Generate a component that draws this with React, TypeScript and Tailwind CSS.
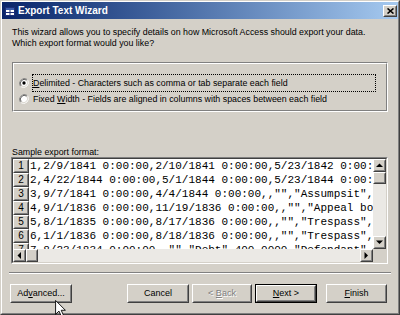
import React from "react";

const ROWS = [
  '1,2/9/1841 0:00:00,2/10/1841 0:00:00,5/23/1842 0:00:',
  '2,4/22/1844 0:00:00,5/1/1844 0:00:00,5/23/1844 0:00:',
  '3,9/7/1841 0:00:00,4/4/1844 0:00:00,,"","Assumpsit",',
  '4,9/1/1836 0:00:00,11/19/1836 0:00:00,,"","Appeal bo',
  '5,8/1/1835 0:00:00,8/17/1836 0:00:00,,"","Trespass",',
  '6,1/1/1836 0:00:00,8/18/1836 0:00:00,,"","Trespass",',
  '7,8/23/1834 0:00:00,,"","Debt",400.0000,"Defendant"',
];

function Raised({ className = "", children }: { className?: string; children?: React.ReactNode }) {
  return (
    <div className={`border border-t-white border-l-white border-r-[#404040] border-b-[#404040] bg-[#d4d0c8] ${className}`}>
      <div className="h-full w-full border border-t-[#d4d0c8] border-l-[#d4d0c8] border-r-[#808080] border-b-[#808080] flex items-center justify-center">
        {children}
      </div>
    </div>
  );
}

function Arrow({ dir }: { dir: "up" | "down" | "left" | "right" }) {
  const pts = {
    up: "0,4 3.5,0.5 7,4",
    down: "0,0.5 3.5,4 7,0.5",
    left: "4,0 0.5,3.5 4,7",
    right: "0.5,0 4,3.5 0.5,7",
  }[dir];
  const vert = dir === "up" || dir === "down";
  return (
    <svg width={vert ? 7 : 5} height={vert ? 5 : 7} viewBox={vert ? "0 0 7 5" : "0 0 5 7"}>
      <polygon points={pts} fill="#000" />
    </svg>
  );
}

function WinButton({
  label,
  u,
  isDefault = false,
  disabled = false,
  className = "",
}: {
  label: string;
  u: number;
  isDefault?: boolean;
  disabled?: boolean;
  className?: string;
}) {
  const text = (
    <span
      className={`text-[9px] leading-[11px] whitespace-pre ${
        disabled ? "text-[#808080] [text-shadow:1px_1px_0_#ffffff]" : "text-black"
      }`}
    >
      {u < 0 ? (
        label
      ) : (
        <>
          {label.slice(0, u)}
          <span className="underline underline-offset-[1px]">{label.slice(u, u + 1)}</span>
          {label.slice(u + 1)}
        </>
      )}
    </span>
  );
  if (isDefault) {
    return (
      <div className={`h-[19px] border border-black ${className}`}>
        <Raised className="h-full w-full">{text}</Raised>
      </div>
    );
  }
  return <Raised className={`h-[19px] ${className}`}>{text}</Raised>;
}

function Radio({ checked }: { checked: boolean }) {
  return (
    <svg width="10" height="10" viewBox="0 0 12 12" className="shrink-0">
      <path d="M10.2 1.8 A6 6 0 0 0 1.8 10.2" fill="none" stroke="#808080" strokeWidth="1" />
      <path d="M1.8 10.2 A6 6 0 0 0 10.2 1.8" fill="none" stroke="#ffffff" strokeWidth="1" />
      <circle cx="6" cy="6" r="4.6" fill="#ffffff" />
      <path d="M9.3 2.7 A4.7 4.7 0 0 0 2.7 9.3" fill="none" stroke="#404040" strokeWidth="1" />
      <path d="M2.7 9.3 A4.7 4.7 0 0 0 9.3 2.7" fill="none" stroke="#d4d0c8" strokeWidth="1" />
      {checked && <circle cx="6" cy="6" r="2" fill="#000" />}
    </svg>
  );
}

export default function App() {
  return (
    <div className="relative w-[400px] h-[315px] overflow-hidden font-['Liberation_Sans',Arial,sans-serif] text-black select-none">
      <div className="w-full h-full border border-t-[#d4d0c8] border-l-[#d4d0c8] border-r-[#404040] border-b-[#404040] bg-[#d4d0c8]">
        <div className="w-full h-full border border-t-white border-l-white border-r-[#808080] border-b-[#808080] flex flex-col">
          {/* Title bar */}
          <div className="h-[17px] shrink-0 flex items-center bg-gradient-to-r from-[#0a246a] to-[#a6caf0]">
            <svg width="10" height="9" viewBox="0 0 10 9" className="ml-[3px] mt-[1px]">
              <rect x="0.5" y="0.5" width="9" height="8" fill="#ffffff" stroke="#1c2f7a" />
              <rect x="1" y="1" width="8" height="2" fill="#3a5aa8" />
              <line x1="5" y1="3" x2="5" y2="8.5" stroke="#1c2f7a" />
              <line x1="0.5" y1="5.5" x2="9.5" y2="5.5" stroke="#1c2f7a" />
            </svg>
            <span className="ml-[3px] text-[10px] font-bold text-white leading-none">Export Text Wizard</span>
            <div className="flex-1" />
            <Raised className="w-[14px] h-[12px] mr-[1px]">
              <svg width="7" height="6" viewBox="0 0 7 6">
                <path d="M0.5 0.5 L6.5 5.5 M6.5 0.5 L0.5 5.5" stroke="#000" strokeWidth="1.6" />
              </svg>
            </Raised>
          </div>

          {/* Content */}
          <div className="flex-1 flex flex-col px-[9px]">
            <p className="ml-[1px] mt-[8px] text-[8.85px] leading-[11px]">
              This wizard allows you to specify details on how Microsoft Access should export your data.
              <br />
              Which export format would you like?
            </p>

            {/* Group box */}
            <div className="ml-[1px] mr-[1px] mt-[13px] border border-t-[#808080] border-l-[#808080] border-r-white border-b-white">
              <div className="border border-t-white border-l-white border-r-[#808080] border-b-[#808080] pt-[10px] pb-[4px] pl-[5px] pr-[10px]">
                <div className="h-[18px] flex items-center">
                  <Radio checked />
                  <div className="ml-[3px] flex-1 h-full border border-dotted border-black flex items-center text-[8.85px] leading-[11px]">
                    <span>
                      <span className="underline underline-offset-[1px]">D</span>elimited - Characters such as comma or tab separate each field
                    </span>
                  </div>
                </div>
                <div className="h-[14px] flex items-center">
                  <Radio checked={false} />
                  <span className="ml-[4px] text-[8.85px] leading-[11px]">
                    Fixed <span className="underline underline-offset-[1px]">W</span>idth - Fields are aligned in columns with spaces between each field
                  </span>
                </div>
              </div>
            </div>

            <div className="ml-[1px] mt-[36px] text-[8.85px] leading-[9px] h-[9px]">Sample export format:</div>

            {/* Grid */}
            <div className="mr-[1px] border border-t-[#808080] border-l-[#808080] border-r-white border-b-white">
              <div className="border border-t-[#404040] border-l-[#404040] border-r-[#d4d0c8] border-b-[#d4d0c8] flex flex-col">
                <div className="flex h-[90px]">
                  <div className="flex-1 bg-white overflow-hidden flex flex-col">
                    {ROWS.map((r, i) => (
                      <div key={i} className="flex h-[14px] shrink-0">
                        <Raised className="w-[16px] h-[14px] shrink-0">
                          <span className="text-[10px] leading-none">{i + 1}</span>
                        </Raised>
                        <div className="pl-[1px] font-['Liberation_Mono','Courier_New',monospace] text-[11px] leading-[14px] whitespace-pre">
                          {r}
                        </div>
                      </div>
                    ))}
                  </div>
                  <div className="w-[13px] shrink-0 flex flex-col bg-[#ebe9e5]">
                    <Raised className="h-[13px] w-[13px] shrink-0">
                      <Arrow dir="up" />
                    </Raised>
                    <Raised className="h-[12px] w-[13px] shrink-0" />
                    <div className="flex-1" />
                    <Raised className="h-[13px] w-[13px] shrink-0">
                      <Arrow dir="down" />
                    </Raised>
                  </div>
                </div>
                <div className="flex h-[13px]">
                  <div className="flex-1 flex bg-[#ebe9e5]">
                    <Raised className="w-[13px] h-[13px] shrink-0">
                      <Arrow dir="left" />
                    </Raised>
                    <Raised className="w-[12px] h-[13px] shrink-0" />
                    <div className="flex-1" />
                    <Raised className="w-[13px] h-[13px] shrink-0">
                      <Arrow dir="right" />
                    </Raised>
                  </div>
                  <div className="w-[13px] bg-[#d4d0c8]" />
                </div>
              </div>
            </div>

            {/* Separator */}
            <div className="-mx-[2px] mt-[8px] border-t border-t-[#808080] border-b border-b-white" />

            {/* Buttons */}
            <div className="mt-[10px] flex">
              <WinButton label="Advanced..." u={2} className="w-[62px] -ml-[1px]" />
              <div className="flex-1" />
              <WinButton label="Cancel" u={-1} className="w-[62px]" />
              <WinButton label="< Back" u={2} disabled className="w-[60px] ml-[3px]" />
              <WinButton label="Next >" u={0} isDefault className="w-[62px] ml-[3px]" />
              <WinButton label="Finish" u={0} className="w-[61px] ml-[9px] mr-[2px]" />
            </div>
          </div>
        </div>
      </div>

      {/* Mouse cursor */}
      <svg width="11" height="17" viewBox="0 0 12 19" className="absolute left-[55px] top-[300px]">
        <path d="M0.5 0.5 L0.5 16 L4.3 12.4 L7 18.3 L9.4 17.2 L6.8 11.5 L11.5 11.5 Z" fill="#ffffff" stroke="#000000" strokeWidth="1" strokeLinejoin="miter" />
      </svg>
    </div>
  );
}
